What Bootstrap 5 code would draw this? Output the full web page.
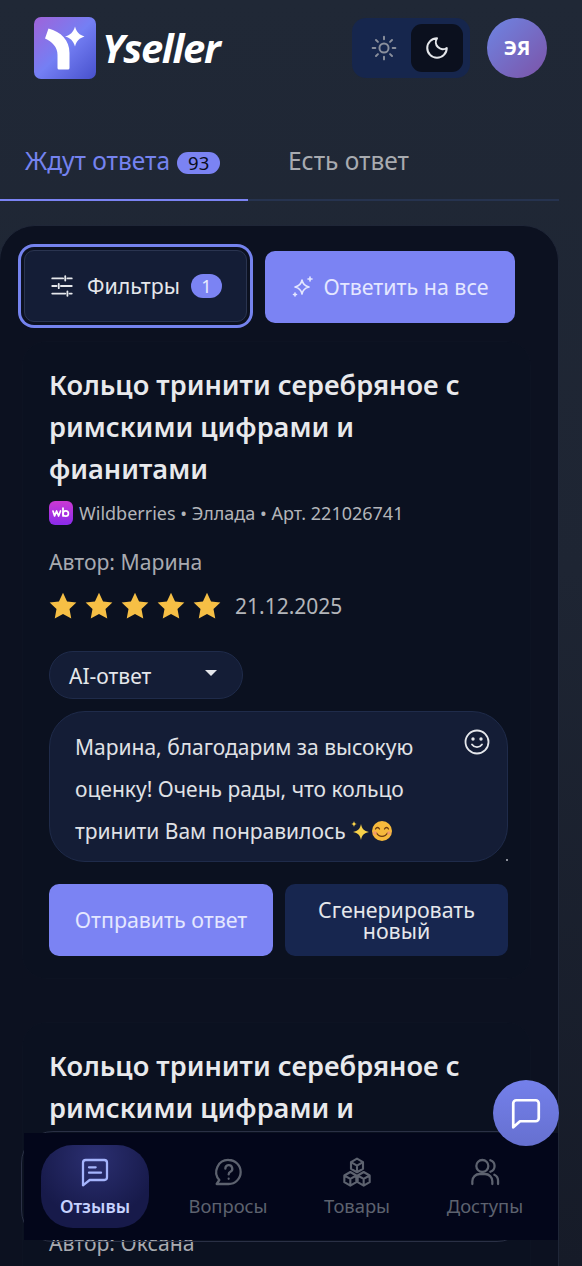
<!DOCTYPE html>
<html lang="ru">
<head>
  <meta charset="UTF-8" />
  <title>Yseller — Отзывы</title>
  <link href="https://cdn.jsdelivr.net/npm/bootstrap@5.3.2/dist/css/bootstrap.min.css" rel="stylesheet" />
  <style>
    html, body { height: 100%; overflow: hidden; }
    body {
      font-family: "Noto Sans", sans-serif;
      background: linear-gradient(180deg, #202836 0%, #1e2533 45%, #161b28 100%);
      color: #e5e7eb;
    }
    .top-bar { padding: 17px 35px 0 34px; height: 79px; }
    .logo-box { width: 62px; height: 62px; }
    .logo-word {
      font-family: "Open Sans", sans-serif;
      font-style: italic;
      font-weight: 700;
      font-size: 40px;
      letter-spacing: -1.3px;
      line-height: 1;
      color: #fff;
      margin-left: 6px;
    }
    .theme-switch {
      width: 118px; height: 60px; margin-top: 1px;
      padding: 6px 7px 6px 6px;
      background: #16264d;
      border-radius: 14px;
    }
    .theme-opt { flex: 1 1 0; border-radius: 11px; }
    .theme-opt.is-on { background: #0b101e; }
    .user-ava {
      width: 60px; height: 60px; margin-top: 1px; margin-left: 17px;
      font-weight: 700; font-size: 20px; color: #fff;
      background: linear-gradient(135deg, #6f80dd 10%, #7b58ad 90%);
    }
    .tabs-row {
      margin: 40px 23px 0 0;
      height: 82px;
      border-bottom: 2px solid #26334f;
    }
    .tab-item {
      height: 82px; margin-bottom: -2px;
      font-size: 24.5px; line-height: 1;
      color: #a8abb0;
      padding-top: 30px;
      padding-left: 40px;
    }
    .tab-item.is-on {
      width: 248px; padding-left: 25px;
      color: #7583f0;
      border-bottom: 2px solid #7b83f3;
    }
    .tab-num {
      background: #7b83f3; color: #090d1c;
      font-size: 18.5px; font-weight: 400; line-height: 22px;
      height: 22px; padding: 0 11px; border-radius: 11px;
      margin-left: 7px;
    }
    .reviews-panel {
      margin: 24px 23px 0 -1px;
      padding: 18px 27px 0 22px;
      background: #0c1120;
      border: 1px solid #1f2637;
      border-radius: 36px 36px 0 0;
    }
    .btn-filter, .btn-all, .btn-send, .btn-regen {
      font-size: 21.4px; height: 72px; border-radius: 10px; border: 0;
    }
    .btn-filter {
      width: 223px; margin: 6px 0 6px 2px;
      color: #e5e7eb; background: #141d36;
      border: 1px solid #2a3450;
      box-shadow: 0 0 0 3px #0c1120, 0 0 0 6px #7583ee;
      padding: 0;
    }
    .filter-num {
      width: 31px; height: 24px; line-height: 24px; border-radius: 12px;
      background: #7b83f3; color: #e8eaff; font-size: 18px; margin-left: 11px;
    }
    .btn-all {
      width: 250px; margin: 7px 0 0 18px; padding: 0;
      background: #7b83f3; color: #e4e7ff;
    }
    .btn-all:hover, .btn-send:hover { background: #7b83f3; color: #e4e7ff; }
    .btn-regen:hover { background: #17264f; color: #e5e7eb; }
    .review-box {
      background: #0b1120;
      border: 1px solid #0d1322;
      border-radius: 24px;
      margin: 13px 0 0 0;
      padding: 22px 22px 22px 26px;
      height: 638px;
      color: #e5e7eb;
    }
    .review-box + .review-box { margin-top: 43px; }
    .item-title {
      font-size: 27.2px; font-weight: 600; line-height: 42px;
      color: #e8e9ec; margin: 0;
    }
    .item-meta { font-size: 18px; line-height: 24px; color: #b3b5ba; margin-top: 11px; }
    .wb-mark {
      width: 24px; height: 24px; border-radius: 6px; margin-right: 6px;
      background: linear-gradient(180deg, #cb39d3, #8a2bea);
    }
    .item-author { font-size: 21.2px; line-height: 26px; color: #a8aab0; margin-top: 24px; }
    .item-date { font-size: 21px; line-height: 28px; color: #b3b5ba; margin-left: 14px; }
    .stars-row { margin-top: 17px; height: 28px; }
    .star-list { gap: 8px; }
    .reply-kind {
      width: 194px; height: 48px; margin-top: 31px;
      padding: 3px 25px 0 19px;
      font-size: 21px; color: #e5e7eb;
      background: #141d36; border: 1px solid #1f2b4a; border-radius: 24px;
    }
    .kind-caret {
      width: 0; height: 0;
      border-left: 6px solid transparent; border-right: 6px solid transparent;
      border-top: 6px solid #e5e7eb;
      margin-top: -6px;
    }
    .reply-text {
      height: 153px; margin-top: 12px;
      padding: 14px 60px 0 25px;
      font-size: 21px; line-height: 42px; color: #e0e2e6;
      background: #141d36; border: 1px solid #1f2b4a; border-radius: 36px;
    }
    .smile-btn { top: 17px; right: 17px; }
    .emoji-pair { vertical-align: -3px; }
    .reply-btns { margin-top: 22px; gap: 12px; }
    .btn-send { width: 224px; padding: 0; background: #7b83f3; color: #e4e7ff; }
    .btn-regen { width: 223px; padding: 0 20px; background: #17264f; color: #e5e7eb; line-height: 21px; }
    .bottom-nav {
      position: fixed; left: 24px; top: 1133px;
      width: 534px; height: 107px;
      padding: 12px 0 0 17px;
      background: #03061a;
    }
    .nav-ghost {
      position: fixed; left: 21px; top: 1131px;
      width: 508px; height: 111px;
      border: 1px solid #2a3045; border-radius: 32px;
    }
    .nav-cell {
      width: 108px; height: 83px; border-radius: 32px;
      font-size: 18.4px; line-height: 24px; color: #5d626f;
      gap: 6px;
    }
    .nav-cell.is-on {
      color: #c7d2fe; font-weight: 600; font-size: 17.6px;
      background: radial-gradient(circle at 50% 15%, #2b2f71 0%, #171a4a 70%);
    }
    .nav-gap-1 { margin-left: 25px; }
    .nav-gap-2 { margin-left: 21px; }
    .nav-gap-3 { margin-left: 20px; }
    .chat-fab {
      position: fixed; left: 493px; top: 1080px;
      width: 66px; height: 66px; z-index: 5;
      background: linear-gradient(180deg, #7480ea, #6670d0);
    }
    .resize-dot { right: -1px; bottom: 0; width: 2px; height: 2px; background: #8b8f99; }
  </style>
</head>
<body>
  <!-- Шапка -->
  <div class="top-bar d-flex justify-content-between">
    <div class="d-flex align-items-center">
      <svg class="logo-box" viewBox="0 0 62 62">
        <defs>
          <linearGradient id="logoGrad" x1="0" y1="0" x2="1" y2="1">
            <stop offset="0" stop-color="#a063d9" />
            <stop offset="0.5" stop-color="#747ff4" />
            <stop offset="1" stop-color="#4750cc" />
          </linearGradient>
        </defs>
        <rect width="62" height="62" rx="7" fill="url(#logoGrad)" />
        <path d="M11 21.500 14.500 11.500C27 15 35.500 23 35.500 36V51a1.500 1.500 0 0 1-1.500 1.500H25a1.500 1.500 0 0 1-1.500-1.500V38C23.500 30 18 24.500 11 21.500Z" fill="#fff" />
        <path d="M31 19.500C36 18.500 39.500 15 41 9.500 42.500 15 45.500 18 50.500 19.500 45.500 21 42.500 24 41 29.500 39.500 24 36 20.500 31 19.500Z" fill="#fff" />
      </svg>
      <span class="logo-word">Yseller</span>
    </div>
    <div class="d-flex">
      <div class="theme-switch d-flex">
        <div class="theme-opt d-flex align-items-center justify-content-center">
          <svg width="26" height="26" viewBox="0 0 24 24" fill="none" stroke="#8a8f9c" stroke-width="1.8" stroke-linecap="round">
            <circle cx="12" cy="12" r="4.2" />
            <path d="M12 1.5v2.5M12 20v2.5M1.5 12h2.5M20 12h2.5M4.6 4.6l1.8 1.8M17.6 17.6l1.8 1.8M4.6 19.4l1.8-1.8M17.6 6.4l1.8-1.8" />
          </svg>
        </div>
        <div class="theme-opt is-on d-flex align-items-center justify-content-center">
          <svg width="26" height="26" viewBox="0 0 24 24" fill="none" stroke="#e5e7eb" stroke-width="1.9" stroke-linecap="round" stroke-linejoin="round">
            <path d="M12 3a6.5 6.5 0 0 0 9 9 9 9 0 1 1-9-9Z" />
          </svg>
        </div>
      </div>
      <div class="user-ava rounded-circle d-flex align-items-center justify-content-center">ЭЯ</div>
    </div>
  </div>

  <!-- Вкладки -->
  <div class="tabs-row d-flex">
    <div class="tab-item is-on"><span>Ждут ответа</span><span class="tab-num d-inline-block align-middle">93</span></div>
    <div class="tab-item">Есть ответ</div>
  </div>

  <div class="reviews-panel">
    <div class="d-flex align-items-start">
      <button class="btn btn-filter d-flex align-items-center justify-content-center">
        <svg class="me-2" width="26" height="26" viewBox="0 0 24 24" fill="none" stroke="#e5e7eb" stroke-width="1.7" stroke-linecap="round">
          <path d="M3 5h10M17 5h4M15 3v4M3 12h4M11 12h10M9 10v4M3 19h12M19 19h2M17 17v4" />
        </svg>
        <span class="ms-1">Фильтры</span>
        <span class="filter-num d-inline-block">1</span>
      </button>
      <button class="btn btn-all d-flex align-items-center justify-content-center">
        <svg class="me-2" width="24" height="24" viewBox="0 0 24 24" fill="none" stroke="#e4e7ff" stroke-width="1.6" stroke-linejoin="round" stroke-linecap="round">
          <path d="M11 5c.8 4.300 2.500 6 7 7-4.500 1-6.200 2.700-7 7-.8-4.300-2.500-6-7-7 4.500-1 6.200-2.700 7-7Z" />
          <path d="M19 2v4M17 4h4M4 18v3M2.500 19.500h3" />
        </svg>
        <span>Ответить на все</span>
      </button>
    </div>

    <div class="card review-box">
      <h2 class="item-title">Кольцо тринити серебряное с римскими цифрами и фианитами</h2>
      <div class="item-meta d-flex align-items-center">
        <span class="wb-mark d-inline-flex align-items-center justify-content-center">
          <svg width="18" height="12" viewBox="0 0 18 12" fill="none" stroke="#fff" stroke-width="1.700" stroke-linecap="round" stroke-linejoin="round">
            <path d="M1 4l1.600 5 2-5 2 5L8.500 4" />
            <path d="M11 1v8" />
            <circle cx="13.700" cy="6.500" r="2.700" />
          </svg>
        </span>
        <span>Wildberries • Эллада • Арт. 221026741</span>
      </div>
      <div class="item-author">Автор: Марина</div>
      <div class="stars-row d-flex align-items-center">
        <div class="star-list d-flex" id="starsOne"></div>
        <span class="item-date">21.12.2025</span>
      </div>
      <div class="reply-kind d-flex align-items-center justify-content-between">
        <span>AI-ответ</span>
        <span class="kind-caret"></span>
      </div>
      <div class="reply-text position-relative">
        Марина, благодарим за высокую оценку! Очень рады, что кольцо тринити Вам понравилось
        <svg class="emoji-pair" width="42" height="22" viewBox="0 0 42 22">
          <path d="M10 4c1 5 3 7 8 8-5 1-7 3-8 8-1-5-3-7-8-8 5-1 7-3 8-8Z" fill="#f7d14a" />
          <path d="M3 1c.4 2 1 2.600 3 3-2 .4-2.600 1-3 3-.4-2-1-2.600-3-3 2-.4 2.600-1 3-3Z" fill="#f7d14a" />
          <circle cx="31" cy="11" r="10" fill="#f6b93c" />
          <path d="M24.500 9c1-2 3-2 4 0M33.500 9c1-2 3-2 4 0" fill="none" stroke="#6b3a12" stroke-width="1.300" stroke-linecap="round" />
          <path d="M25.500 13c2.500 4.500 8.500 4.500 11 0" fill="none" stroke="#6b3a12" stroke-width="1.300" stroke-linecap="round" />
          <circle cx="24" cy="13" r="1.800" fill="#f39a6b" />
          <circle cx="38" cy="13" r="1.800" fill="#f39a6b" />
        </svg>
        <svg class="smile-btn position-absolute" width="26" height="26" viewBox="0 0 26 26" fill="none" stroke="#e5e7eb" stroke-width="1.800" stroke-linecap="round">
          <circle cx="13" cy="13" r="11.500" />
          <path d="M8 15.500c2.500 3.500 7.500 3.500 10 0" />
          <circle cx="9" cy="10" r=".8" fill="#e5e7eb" />
          <circle cx="17" cy="10" r=".8" fill="#e5e7eb" />
        </svg>
        <span class="resize-dot position-absolute"></span>
      </div>
      <div class="reply-btns d-flex">
        <button class="btn btn-send">Отправить ответ</button>
        <button class="btn btn-regen">Сгенерировать новый</button>
      </div>
    </div>

    <div class="card review-box">
      <h2 class="item-title">Кольцо тринити серебряное с римскими цифрами и фианитами</h2>
      <div class="item-meta d-flex align-items-center">
        <span class="wb-mark d-inline-flex"></span>
        <span>Wildberries • Эллада • Арт. 221026741</span>
      </div>
      <div class="item-author">Автор: Оксана</div>
    </div>
  </div>

  <!-- Чат -->
  <div class="chat-fab rounded-circle d-flex align-items-center justify-content-center">
    <svg width="36" height="36" viewBox="0 0 24 24" fill="none" stroke="#fff" stroke-width="1.800" stroke-linejoin="round">
      <path d="M5.500 3.500h13a2 2 0 0 1 2 2v10a2 2 0 0 1-2 2H8l-4.500 4V5.500a2 2 0 0 1 2-2Z" />
    </svg>
  </div>

  <!-- Нижнее меню -->
  <div class="nav-ghost"></div>
  <nav class="bottom-nav d-flex">
    <div class="nav-cell is-on d-flex flex-column align-items-center justify-content-center">
      <svg width="32" height="32" viewBox="0 0 24 24" fill="none" stroke="#a5b4fc" stroke-width="1.700" stroke-linejoin="round" stroke-linecap="round">
        <path d="M5 3h14a2 2 0 0 1 2 2v11a2 2 0 0 1-2 2H8l-5 4V5a2 2 0 0 1 2-2Z" />
        <path d="M7.500 8.500h5M7.500 12.500h9" />
      </svg>
      <span>Отзывы</span>
    </div>
    <div class="nav-cell nav-gap-1 d-flex flex-column align-items-center justify-content-center">
      <svg width="32" height="32" viewBox="0 0 24 24" fill="none" stroke="#5d626f" stroke-width="1.700" stroke-linejoin="round" stroke-linecap="round">
        <path d="M12.500 3a9 9 0 0 1 0 18H3.500l2-3a9 9 0 0 1 7-15Z" />
        <path d="M10 9.500a2.600 2.600 0 1 1 3.800 2.300c-1 .6-1.300 1-1.300 2" />
        <path d="M12.500 17v.1" />
      </svg>
      <span>Вопросы</span>
    </div>
    <div class="nav-cell nav-gap-2 d-flex flex-column align-items-center justify-content-center">
      <svg width="32" height="32" viewBox="0 0 24 24" fill="none" stroke="#5d626f" stroke-width="1.600" stroke-linejoin="round" stroke-linecap="round">
        <path d="M12 2l4.500 2.600v5L12 12.200 7.500 9.600v-5ZM7.500 4.600 12 7.200l4.500-2.600M12 7.200v5" />
        <path d="M7 12l4.500 2.600v5L7 22.200 2.500 19.600v-5ZM2.500 14.600 7 17.200l4.500-2.600M7 17.200v5" />
        <path d="M17 12l4.500 2.600v5L17 22.200l-4.500-2.600v-5ZM12.500 14.600 17 17.200l4.500-2.600M17 17.200v5" />
      </svg>
      <span>Товары</span>
    </div>
    <div class="nav-cell nav-gap-3 d-flex flex-column align-items-center justify-content-center">
      <svg width="32" height="32" viewBox="0 0 24 24" fill="none" stroke="#5d626f" stroke-width="1.700" stroke-linejoin="round" stroke-linecap="round">
        <circle cx="10" cy="7.500" r="4.500" />
        <path d="M2.500 21v-2a5.500 5.500 0 0 1 5.500-5.500h4a5.500 5.500 0 0 1 5.500 5.500v2" />
        <path d="M16 3.200a4.500 4.500 0 0 1 0 8.600M19 14c1.800.8 2.800 2.500 2.800 4.500V21" />
      </svg>
      <span>Доступы</span>
    </div>
  </nav>

  <script>
    const starPath = "M12 1.500l3.200 6.900 7.300.9-5.400 5.100 1.400 7.400L12 18.200l-6.500 3.600 1.400-7.400L1.500 9.300l7.300-.9Z";
    document.getElementById("starsOne").innerHTML = Array(5).fill(
      `<svg width="28" height="28" viewBox="1 1 22 22"><path d="${starPath}" fill="#f6bf45"/></svg>`
    ).join("");
  </script>
</body>
</html>
